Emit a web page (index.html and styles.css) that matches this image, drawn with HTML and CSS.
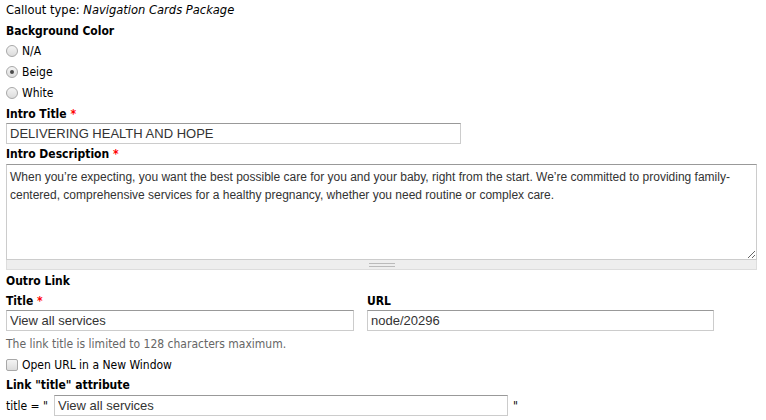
FILE: index.html
```html
<!DOCTYPE HTML><html>
<head>
	<meta name="viewport" charset="UTF-8" content="width=device-width, initial-scale=1">
	<title>Callout</title>
	<link rel="stylesheet" href="styles.css">
</head>
<body>
<form class="callout">
	<div class="callout-type">Callout type: <em>Navigation Cards Package</em></div>

	<div class="item bg-item">
		<label class="lbl">Background Color</label>
		<div class="radios">
			<label class="opt"><input type="radio" name="bg" class="radio"> N/A</label>
			<label class="opt"><input type="radio" name="bg" class="radio" checked> Beige</label>
			<label class="opt"><input type="radio" name="bg" class="radio"> White</label>
		</div>
	</div>

	<div class="item title-item">
		<label class="lbl">Intro Title <span class="req">*</span></label>
		<input type="text" class="text intro-title" value="DELIVERING HEALTH AND HOPE">
	</div>

	<div class="item desc-item">
		<label class="lbl">Intro Description <span class="req">*</span></label>
		<div class="resizable">
			<textarea class="desc" rows="5">When you’re expecting, you want the best possible care for you and your baby, right from the start. We’re committed to providing family-centered, comprehensive services for a healthy pregnancy, whether you need routine or complex care.</textarea>
			<div class="grippie"><span></span></div>
		</div>
	</div>

	<div class="item outro">
		<label class="lbl">Outro Link</label>
		<div class="link-row">
			<div class="link-col">
				<label class="lbl">Title <span class="req">*</span></label>
				<input type="text" class="text link-title" value="View all services">
			</div>
			<div class="link-col">
				<label class="lbl">URL</label>
				<input type="text" class="text link-url" value="node/20296">
			</div>
		</div>
		<div class="note">The link title is limited to 128 characters maximum.</div>
		<label class="opt check"><input type="checkbox" class="checkbox"> Open URL in a New Window</label>
		<label class="lbl attr-lbl">Link "title" attribute</label>
		<div class="attr"><span>title = "</span><input type="text" class="text attr-input" value="View all services"><span>"</span></div>
	</div>
</form>
</body>
</html>
```

FILE: styles.css
```css
html {
	font-family: "DejaVu Sans Condensed", "DejaVu Sans", sans-serif;
	font-stretch: condensed;
}
body {
	margin: 0;
	background-color: #fff;
	color: #000;
	font-size: 12px;
}
.callout {
	padding: 2px 6px 0 6px;
}
.callout-type {
	font-size: 12.8px;
	line-height: 16px;
	height: 16px;
}
.callout-type em {
	font-style: italic;
}
.item {
	margin-top: 4px;
}
.bg-item {
	margin-top: 5px;
}
.title-item {
	margin-top: 3px;
}
.desc-item {
	margin-top: 2px;
}
.lbl {
	display: block;
	font-weight: bold;
	line-height: 16px;
	height: 16px;
}
.req {
	color: #f00;
}
.radios {
	margin-top: 1px;
}
.opt {
	display: flex;
	align-items: center;
	gap: 4px;
	height: 21px;
	font-size: 12px;
}
.radio, .checkbox {
	appearance: none;
	-webkit-appearance: none;
	margin: 0;
	width: 12px;
	height: 12px;
	border: 1px solid #a8a8a8;
	border-radius: 50%;
	background: linear-gradient(#f4f4f4, #dcdcdc);
	position: relative;
}
.radio:checked::after {
	content: "";
	position: absolute;
	left: 3px;
	top: 3px;
	width: 4px;
	height: 4px;
	border-radius: 50%;
	background: #4a4a4a;
}
.checkbox {
	border-radius: 2px;
}
.text {
	display: block;
	box-sizing: border-box;
	height: 21px;
	margin: 1px 0 0 0;
	padding: 0 3px;
	border: 1px solid #ccc;
	border-top-color: #999;
	font-family: "Liberation Sans", Arial, sans-serif;
	font-size: 13px;
	color: #333;
	background: #fff;
}
.intro-title {
	width: 455px;
}
.resizable {
	margin-top: 2px;
	width: 751px;
}
.desc {
	display: block;
	box-sizing: border-box;
	width: 751px;
	height: 96px;
	margin: 0;
	padding: 3px 3px;
	border: 1px solid #ccc;
	border-top-color: #999;
	font-family: "Liberation Sans", Arial, sans-serif;
	font-size: 12px;
	line-height: 18px;
	color: #333;
	resize: vertical;
}
.grippie {
	height: 9px;
	background: #eee;
	border: 1px solid #ddd;
	border-top: none;
	display: flex;
	justify-content: center;
	align-items: center;
}
.grippie span {
	width: 26px;
	height: 4px;
	border-top: 1px solid #bbb;
	border-bottom: 1px solid #bbb;
	box-sizing: border-box;
}
.outro {
	margin-top: 3px;
}
.link-row {
	display: flex;
	gap: 13px;
	margin-top: 4px;
}
.link-title {
	width: 348px;
}
.link-url {
	width: 347px;
}
.note {
	font-size: 12px;
	color: #666;
	line-height: 16px;
	margin-top: 5px;
}
.check {
	margin-top: 2px;
}
.attr-lbl {
	margin-top: 2px;
}
.attr {
	display: flex;
	align-items: center;
	margin-top: 2px;
}
.attr-input {
	width: 454px;
	margin: 0 5px 0 6px;
}
```
